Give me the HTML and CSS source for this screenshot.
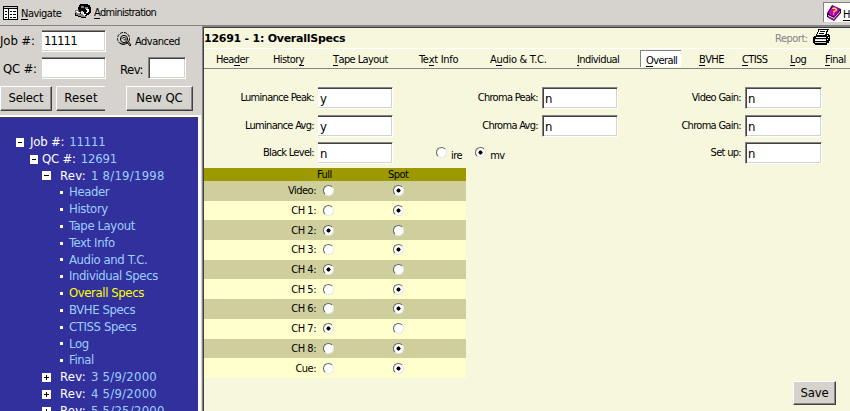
FILE: index.html
```html
<!DOCTYPE html>
<html lang="en">
<head>
<meta charset="utf-8">
<title>12691 - 1: OverallSpecs</title>
<link rel="stylesheet" href="styles.css">
</head>
<body>
<header class="toolbar">
  <svg class="ico-nav" width="15" height="14" viewBox="0 0 15 14" shape-rendering="crispEdges"><path fill="#000" d="M0 0h15v14H0z"/><path fill="#fff" d="M1 3h13v10H1z"/><path fill="#d6d3ce" d="M1 1h13v1H1z"/><path fill="#000" d="M5 3h1v10H5zM2 5h2v1H2zM2 8h2v1H2zM2 11h2v1H2zM7 5h2v1H7zM10 5h3v1h-3zM7 8h2v1H7zM10 8h3v1h-3zM7 11h2v1H7zM10 11h3v1h-3z"/></svg>
  <span class="t-nav"><u>N</u>avigate</span>
  <svg class="ico-admin" width="16" height="15" viewBox="0 0 16 15" shape-rendering="crispEdges"><path d="M5 0h8v1h2v2h1v6h-1v1h-1v1h-2v1h-2v-2H9V8H8V7H6v2H4V6H3V3h1V1h1z"/><path fill="#848284" d="M0 6h4v2h2v2h3v2h2v2H7v-1H4v-1H1v-1H0zM6 2h3v2H6zM10 3h3v2h-3z"/><path fill="#fff" d="M11 5h3v3h-1v1h-2V8h1V6h-1zM1 7h2v1h2v1H2V8H1zM8 8h1v2h2v1H8z"/><path d="M0 9h1v2h2v1h3v1H3v-1H0zM6 13h5v1H6zM5 9h1v1H5zM9 9h1v1H9z"/></svg>
  <span class="t-admin"><u>A</u>dministration</span>
  <div class="help">
    <svg width="14" height="16" viewBox="0 0 14 16"><path fill="#310031" d="M0 8 5 0l9 4v4l-7 8-7-4z"/><path fill="#c600c6" d="m1 8 5-7 7 3-6 8z"/><path fill="#fff" d="m1 10 6 3 6-7v1l-6 7-6-3z"/><path fill="#c600c6" d="m1 11.500 6 3 6-7v.8L7 15.500l-6-3z"/><path fill="none" stroke="#ff0" stroke-width="1.300" d="M5.500 4c1-2 5 0 3.500 1.500L7 6.500v1M6 8.800h1"/></svg>
    <span class="t-help"><u>H</u>elp</span>
  </div>
</header>
<div class="body">
  <aside class="side">
    <form class="search">
      <div class="line line1">
        <label class="l-job">Job #:</label><span class="box cut b-job">11111</span>
        <svg class="ico-adv" width="15" height="15" viewBox="0 0 15 15" fill="none" stroke="#000"><circle cx="6.5" cy="6.500" r="6" stroke-dasharray="3 1"/><circle cx="7" cy="7" r="3.6"/><path d="M5 7c0-2 4-2 4 0s-2 1-2 0M3 11c3 2 5 1 7-1l3 4 1-1-3-4"/></svg>
        <span class="l-adv">Advanced</span>
      </div>
      <div class="line line2">
        <label class="l-qc">QC #:</label><span class="box cut b-qc"></span><label class="l-rev">Rev:</label><span class="box b-rev"></span>
      </div>
      <div class="line line3">
        <span class="btn b-sel">Select</span><span class="btn b-reset">Reset</span><span class="btn b-new">New QC</span>
      </div>
    </form>
    <nav class="tree">
      <div class="n n0"><i class="pm"></i><b>Job #:</b> 11111</div>
      <div class="n n1"><i class="pm"></i><b>QC #:</b> 12691</div>
      <div class="n n2"><i class="pm"></i><b>Rev:</b> 1 8/19/1998</div>
      <div class="n n3"><i class="dot"></i><span>Header</span></div>
      <div class="n n3"><i class="dot"></i><span>History</span></div>
      <div class="n n3"><i class="dot"></i><span>Tape Layout</span></div>
      <div class="n n3"><i class="dot"></i><span>Text Info</span></div>
      <div class="n n3"><i class="dot"></i><span>Audio and T.C.</span></div>
      <div class="n n3"><i class="dot"></i><span>Individual Specs</span></div>
      <div class="n n3 on"><i class="dot"></i><span>Overall Specs</span></div>
      <div class="n n3"><i class="dot"></i><span>BVHE Specs</span></div>
      <div class="n n3"><i class="dot"></i><span>CTISS Specs</span></div>
      <div class="n n3"><i class="dot"></i><span>Log</span></div>
      <div class="n n3"><i class="dot"></i><span>Final</span></div>
      <div class="n n2"><i class="pm plus"></i><b>Rev:</b> 3 5/9/2000</div>
      <div class="n n2"><i class="pm plus"></i><b>Rev:</b> 4 5/9/2000</div>
      <div class="n n2"><i class="pm plus"></i><b>Rev:</b> 5 5/25/2000</div>
    </nav>
  </aside>
  <main class="main">
    <div class="title"><h1>12691 - 1: OverallSpecs</h1><span class="report">Report:</span>
      <svg width="18" height="17" viewBox="0 0 18 17" shape-rendering="crispEdges"><path d="M5 0h11v1h-1v2h-1v2h2v1h1v6h-1v2h-2v2H2v-1H1v-1H0V8h1V7h2V5h1V3h1z"/><path fill="#fff" d="M6 1h8v1h-1v3h-1v1H4V5h1V3h1z"/><path fill="#d6d3ce" d="M2 10h11v1H2zM2 13h11v1H2z"/><path fill="#fff" d="M3 8h10v1H3zM2 11h11v1H2zM14 6h1v1h-1zM15 8h1v1h-1zM14 10h1v1h-1z"/><path d="M7 2h5v1H7zM6 4h5v1H6z"/></svg>
    </div>
    <nav class="tabs">
      <span class="s1">Hea<u>d</u>er</span><span class="s2">Histor<u>y</u></span><span class="s3"><u>T</u>ape Layout</span><span class="s4">Te<u>x</u>t Info</span><span class="s5">A<u>u</u>dio &amp; T.C.</span><span class="s6"><u>I</u>ndividual</span><span class="sel"><u>O</u>verall</span><span class="s8"><u>B</u>VHE</span><span class="s9"><u>C</u>TISS</span><span class="s10"><u>L</u>og</span><span class="s11"><u>F</u>inal</span>
    </nav>
    <section class="fields">
      <label>Luminance Peak:</label><span class="box cut">y</span><label>Chroma Peak:</label><span class="box">n</span><label>Video Gain:</label><span class="box">n</span>
      <label>Luminance Avg:</label><span class="box cut">y</span><label>Chroma Avg:</label><span class="box">n</span><label>Chroma Gain:</label><span class="box">n</span>
      <label>Black Level:</label><span class="box cut">n</span><div class="units"><i class="r"></i><span>ire</span><i class="r c"></i><span>mv</span></div><label class="setup">Set up:</label><span class="box">n</span>
    </section>
    <section class="table">
      <div class="th"><span></span><span>Full</span><span>Spot</span></div>
      <div class="tr"><span>Video:</span><i class="r"></i><i class="r c"></i></div>
      <div class="tr"><span>CH 1:</span><i class="r"></i><i class="r c"></i></div>
      <div class="tr"><span>CH 2:</span><i class="r c"></i><i class="r"></i></div>
      <div class="tr"><span>CH 3:</span><i class="r"></i><i class="r c"></i></div>
      <div class="tr"><span>CH 4:</span><i class="r c"></i><i class="r"></i></div>
      <div class="tr"><span>CH 5:</span><i class="r"></i><i class="r c"></i></div>
      <div class="tr"><span>CH 6:</span><i class="r"></i><i class="r c"></i></div>
      <div class="tr"><span>CH 7:</span><i class="r c"></i><i class="r"></i></div>
      <div class="tr"><span>CH 8:</span><i class="r"></i><i class="r c"></i></div>
      <div class="tr"><span>Cue:</span><i class="r"></i><i class="r c"></i></div>
    </section>
    <div class="foot"><span class="btn save">Save</span></div>
  </main>
</div>
</body>
</html>
```

FILE: styles.css
```css
* { box-sizing: border-box; }
body {
  margin: 0; width: 850px; height: 411px; overflow: hidden;
  background: #d6d3ce; color: #000;
  font: 11px/14px "DejaVu Sans Condensed", "DejaVu Sans", sans-serif;
  font-stretch: condensed;
  letter-spacing: -0.5px;
  white-space: nowrap;
  display: flex; flex-direction: column;
}
i { font-style: normal; flex: none; }
svg { flex: none; display: block; }
u { text-decoration: none; box-shadow: 0 -1px 0 #000 inset; display: inline-block; line-height: 13px; height: 13px; }

.toolbar { height: 25px; flex: none; display: flex; align-items: flex-start; padding-left: 3px; }
.ico-nav { margin-top: 6px; }
.t-nav { margin: 7px 0 0 3px; width: 54px; }
.ico-admin { margin-top: 4px; }
.t-admin { margin: 6px 0 0 3px; letter-spacing: -0.75px; }
.help {
  margin: 2px 0 0 auto; width: 27px; height: 20px; overflow: hidden; background: #fff;
  border-top: 1px solid #848284; border-left: 1px solid #848284;
  display: flex; padding: 2px 0 0 3px; gap: 2px;
}
.t-help { padding-top: 3px; }

.body { flex: 1; min-height: 0; display: flex; }
.side { width: 202px; flex: none; border-top: 1px solid #848284; display: flex; flex-direction: column; overflow: hidden; }
.search { height: 89px; flex: none; margin: 0; font-size: 13px; line-height: 16px; }
.line { display: flex; }
.line1 { padding-top: 4px; height: 31px; }
.line2 { height: 29px; }
.line3 { height: 25px; }
.l-job { width: 42px; padding-top: 3px; letter-spacing: -0.1px; }
.l-qc { width: 42px; padding: 4px 0 0 3px; letter-spacing: -0.2px; }
.l-rev { padding: 5px 0 0 14px; width: 42px; }
.l-adv { font-size: 11px; padding: 4px 0 0 3px; }
.ico-adv { margin: 2px 0 0 11px; }
.box {
  height: 22px; background: #fff; flex: none; padding: 2px 0 0 2px; font-size: 13px; line-height: 16px;
  border: 1px solid #fff; border-top: 1px solid #848284; border-left: 1px solid #848284;
  box-shadow: inset 1px 1px 0 #424142, inset -1px -1px 0 #d6d3ce;
}
.cut { border-left: 0; box-shadow: inset 0 1px 0 #424142, inset -1px -1px 0 #d6d3ce; }
.b-job { width: 64px; letter-spacing: -0.9px; }
.b-qc { width: 64px; }
.b-rev { width: 38px; }
.btn {
  height: 25px; font-size: 13px; line-height: 16px; text-align: center; padding-top: 3px; background: #d6d3ce;
  border: 1px solid #424142; border-top-color: #fff; border-left-color: #fff;
  box-shadow: inset -1px -1px 0 #848284; letter-spacing: -0.2px;
}
.b-sel { width: 52px; }
.b-reset { width: 49px; margin-left: 4px; border-right: 0; box-shadow: inset 0 -1px 0 #848284; letter-spacing: 0.2px; }
.b-new { width: 67px; margin-left: 21px; letter-spacing: 0; }

.tree {
  flex: 1; min-height: 0; overflow: hidden; margin-right: 1px; padding-top: 17px;
  background: #31309c; color: #9ccfff; font-size: 13px; line-height: 16.8px;
  border-top: 2px solid #fff; border-right: 3px solid #fff; box-shadow: inset 0 1px 0 #424142;
}
.n { height: 16.8px; display: flex; align-items: center; }
.n b { font-weight: 400; color: #fff; margin-right: 5px; }
.n0 { padding-left: 16px; letter-spacing: -0.2px; }
.n1 { padding-left: 30px; letter-spacing: -0.2px; }
.n2 { padding-left: 42px; letter-spacing: 0.25px; }
.n3 { padding-left: 60px; }
.n3 span { margin-left: 6px; letter-spacing: -0.4px; }
.on { color: #ff0; }
.pm { width: 8px; height: 9px; margin-right: 6px; background: linear-gradient(#000, #000) 2px 4px / 4px 1px no-repeat #fff; }
.n1 .pm { margin-right: 4px; }
.n2 .pm { width: 9px; margin-right: 9px; background: linear-gradient(#000, #000) 2px 4px / 5px 1px no-repeat #fff; }
.n2 .plus { background: linear-gradient(#000, #000) 2px 4px / 5px 1px no-repeat, linear-gradient(#000, #000) 4px 2px / 1px 5px no-repeat #fff; }
.dot { width: 3px; height: 3px; background: #fff; }

.main {
  flex: 1; min-width: 0; background: #f7f7de; border-top: 2px solid #848284; border-left: 1px solid #848284;
  box-shadow: inset 1px 1px 0 #424142; padding: 1px 0 0 1px; display: flex; flex-direction: column;
}
.title { height: 20px; flex: none; display: flex; }
.title svg { margin-top: 1px; }
h1 { font: bold 11px/14px "DejaVu Sans", sans-serif; margin: 4px 0 0; letter-spacing: -0.25px; width: 571px; }
.report { color: #848284; margin-top: 4px; width: 38px; }
.tabs {
  height: 21px; flex: none; border-top: 1px solid #fff; border-bottom: 1px solid #848284; padding-left: 12px;
  display: grid; grid-template-columns: 57px 60px 86px 71px 87px 63px 59px 43px 48px 35px auto;
}
.tabs span { padding-top: 4px; letter-spacing: -0.6px; }
.tabs .s4, .tabs .s5 { letter-spacing: -0.3px; }
.tabs .sel {
  background: #fff; width: 41px; height: 17px; margin-top: 1px; padding: 3px 0 0 5px;
  border-top: 1px solid #848284; border-left: 1px solid #848284;
}
.fields {
  flex: none; display: grid; padding-top: 18px;
  grid-template-columns: 114px 76px 148px 76px 127px 77px; grid-template-rows: 28px 27px 26px;
}
.fields label { text-align: right; padding: 4px 4px 0 0; letter-spacing: -0.7px; }
.fields .cut { width: 75px; }
.fields .box { padding-top: 3px; }
.units { grid-column: 3 / 5; display: flex; padding: 5px 0 0 42px; }
.units span { padding: 2px 13px 0 4px; }
.r {
  width: 11px; height: 11px; border-radius: 50%; background: #fff;
  border: 1px solid; border-color: #636163 #e7e7e7 #e7e7e7 #636163;
}
.c { background: radial-gradient(circle at 4.5px 4.5px, #000 1.8px, #fff 2.3px); }

.table { width: 262px; flex: none; }
.th, .tr { display: grid; grid-template-columns: 112px 71px auto; align-items: center; }
.th { height: 13px; background: #9c9a00; line-height: 14px; }
.th span { padding-left: 1px; }
.tr { height: 19.7px; background: #ffffce; grid-template-columns: 112px 7px 70px auto; }
.tr:nth-child(even) { background: #cecf9c; }
.tr span { text-align: right; padding-top: 1px; }
.tr i:nth-of-type(1) { grid-column: 3; }
.foot { display: flex; justify-content: flex-end; padding: 3px 14px 0 0; }
.save { width: 43px; height: 24px; }
```
